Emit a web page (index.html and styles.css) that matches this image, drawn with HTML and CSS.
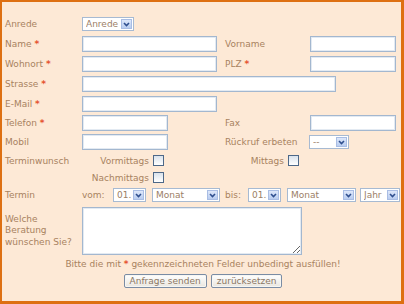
FILE: index.html
```html
<!DOCTYPE html>
<html lang="de">
<head>
    <meta charset="UTF-8">
    <title>Anfrage</title>
    <link rel="stylesheet" href="styles.css">
</head>
<body>
    <form class="frame">
        <div class="row">
            <span class="lbl">Anrede</span>
            <span class="sel sel-anrede">
                <select><option>Anrede</option><option>Herr</option><option>Frau</option></select>
                <span class="arr"><svg width="7" height="5" viewBox="0 0 7 5"><path d="M1 1l2.5 2.5L6 1" fill="none" stroke="#2f4f8f" stroke-width="1.6"/></svg></span>
            </span>
        </div>
        <div class="row">
            <span class="lbl">Name <b class="req">*</b></span>
            <span class="fld"><input class="inp inp-m" type="text"></span>
            <span class="lbl2">Vorname</span>
            <input class="inp inp-s" type="text">
        </div>
        <div class="row">
            <span class="lbl">Wohnort <b class="req">*</b></span>
            <span class="fld"><input class="inp inp-m" type="text"></span>
            <span class="lbl2">PLZ <b class="req">*</b></span>
            <input class="inp inp-s" type="text">
        </div>
        <div class="row">
            <span class="lbl">Strasse <b class="req">*</b></span>
            <input class="inp inp-l" type="text">
        </div>
        <div class="row">
            <span class="lbl">E-Mail <b class="req">*</b></span>
            <input class="inp inp-m" type="text">
        </div>
        <div class="row row-tel">
            <span class="lbl">Telefon <b class="req">*</b></span>
            <span class="fld"><input class="inp inp-s" type="text"></span>
            <span class="lbl2">Fax</span>
            <input class="inp inp-s" type="text">
        </div>
        <div class="row">
            <span class="lbl">Mobil</span>
            <span class="fld"><input class="inp inp-s" type="text"></span>
            <span class="lbl2">Rückruf erbeten</span>
            <span class="sel sel-rueck">
                <select><option>--</option><option>ja</option><option>nein</option></select>
                <span class="arr"><svg width="7" height="5" viewBox="0 0 7 5"><path d="M1 1l2.5 2.5L6 1" fill="none" stroke="#2f4f8f" stroke-width="1.6"/></svg></span>
            </span>
        </div>
        <div class="row row-time">
            <span class="lbl">Terminwunsch</span>
            <label class="cb1">Vormittags <input type="checkbox"></label>
            <label class="cb2">Mittags <input type="checkbox"></label>
        </div>
        <div class="row row-time">
            <span class="lbl"></span>
            <label class="cb1">Nachmittags <input type="checkbox"></label>
        </div>
        <div class="row row-termin">
            <span class="lbl">Termin</span>
            <span class="vom">vom:</span>
            <span class="sel sel-day">
                <select><option>01.</option></select>
                <span class="arr"><svg width="7" height="5" viewBox="0 0 7 5"><path d="M1 1l2.5 2.5L6 1" fill="none" stroke="#2f4f8f" stroke-width="1.6"/></svg></span>
            </span>
            <span class="sel sel-month">
                <select><option>Monat</option></select>
                <span class="arr"><svg width="7" height="5" viewBox="0 0 7 5"><path d="M1 1l2.5 2.5L6 1" fill="none" stroke="#2f4f8f" stroke-width="1.6"/></svg></span>
            </span>
            <span class="bis">bis:</span>
            <span class="sel sel-day">
                <select><option>01.</option></select>
                <span class="arr"><svg width="7" height="5" viewBox="0 0 7 5"><path d="M1 1l2.5 2.5L6 1" fill="none" stroke="#2f4f8f" stroke-width="1.6"/></svg></span>
            </span>
            <span class="sel sel-month2">
                <select><option>Monat</option></select>
                <span class="arr"><svg width="7" height="5" viewBox="0 0 7 5"><path d="M1 1l2.5 2.5L6 1" fill="none" stroke="#2f4f8f" stroke-width="1.6"/></svg></span>
            </span>
            <span class="sel sel-year">
                <select><option>Jahr</option></select>
                <span class="arr"><svg width="7" height="5" viewBox="0 0 7 5"><path d="M1 1l2.5 2.5L6 1" fill="none" stroke="#2f4f8f" stroke-width="1.6"/></svg></span>
            </span>
        </div>
        <div class="row row-msg">
            <span class="lbl lbl-multi">Welche<br>Beratung<br>wünschen Sie?</span>
            <textarea class="msg"></textarea>
        </div>
        <p class="note">Bitte die mit <b class="req">*</b> gekennzeichneten Felder unbedingt ausfüllen!</p>
        <div class="buttons">
            <button type="button" class="btn">Anfrage senden</button>
            <button type="reset" class="btn">zurücksetzen</button>
        </div>
    </form>
</body>
</html>
```

FILE: styles.css
```css
* {
    margin: 0;
    padding: 0;
    box-sizing: border-box;
}
body {
    font-family: 'DejaVu Sans', Verdana, sans-serif;
    font-size: 9px;
    color: #a8825f;
    background-color: #fde9d6;
}
.frame {
    width: 404px;
    height: 304px;
    border-style: solid;
    border-color: #de7012;
    border-width: 2px 3px 3px 2px;
    background-color: #fde9d6;
    padding: 12px 0 0 3px;
}
.row {
    display: flex;
    align-items: center;
    height: 20px;
}
.row-tel {
    height: 18px;
}
.row-time {
    height: 17px;
}
.row-termin {
    height: 18px;
}
.row-msg {
    height: 54px;
}
.lbl {
    width: 77px;
    flex-shrink: 0;
}
.lbl-multi {
    line-height: 11.5px;
}
.lbl2 {
    width: 85px;
    flex-shrink: 0;
}
.fld {
    width: 143px;
    flex-shrink: 0;
    display: flex;
}
.req {
    color: #e5532f;
    font-weight: bold;
}
.inp {
    height: 16px;
    border: 1px solid #a3b7cf;
    box-shadow: inset 0 0 0 1px #e3eaf2;
    background: #fff;
    font: inherit;
}
.inp-m {
    width: 135px;
}
.inp-s {
    width: 86px;
}
.inp-l {
    width: 254px;
}
.sel {
    display: inline-flex;
    align-items: center;
    height: 14px;
    border: 1px solid #a7bad2;
    background: #fff;
    padding-right: 1px;
    flex-shrink: 0;
}
.sel select {
    appearance: none;
    -webkit-appearance: none;
    border: none;
    background: transparent;
    font: inherit;
    color: #9c8066;
    padding-left: 3px;
    flex: 1;
    min-width: 0;
    height: 12px;
    line-height: 12px;
    outline: none;
}
.arr {
    display: flex;
    align-items: center;
    justify-content: center;
    width: 11px;
    height: 10px;
    border: 1px solid #a9bde4;
    background: linear-gradient(#dde7fa, #b9cdf0);
}
.sel-anrede {
    width: 52px;
}
.sel-rueck {
    width: 40px;
    margin-left: -1px;
}
.sel-day {
    width: 33px;
}
.sel-month {
    width: 68px;
    margin-left: 6px;
}
.sel-month2 {
    width: 69px;
    margin-left: 6px;
}
.sel-year {
    width: 40px;
    margin-left: 4px;
}
.vom {
    width: 31px;
}
.bis {
    width: 23px;
    margin-left: 5px;
}
.cb1, .cb2 {
    display: flex;
    align-items: center;
    justify-content: flex-end;
    gap: 4px;
    padding-right: 1px;
    flex-shrink: 0;
}
.cb1 {
    width: 83px;
}
.cb2 {
    width: 135px;
}
input[type="checkbox"] {
    appearance: none;
    -webkit-appearance: none;
    width: 11px;
    height: 11px;
    border: 1px solid #4d6888;
    background: linear-gradient(#d9e2ec, #fff);
    margin: 0;
}
.msg {
    width: 220px;
    height: 48px;
    border: 1px solid #a3b7cf;
    box-shadow: inset 0 0 0 1px #e3eaf2;
    background: #fff;
    font: inherit;
}
.note {
    height: 12px;
    line-height: 12px;
    text-align: center;
}
.buttons {
    display: flex;
    justify-content: center;
    gap: 4px;
    padding-top: 4px;
}
.btn {
    height: 14px;
    padding: 0 5px;
    font: inherit;
    color: #8c7763;
    border: 1px solid #7a8ca4;
    border-radius: 2px;
    background: linear-gradient(#ffffff, #e9e6df);
    box-shadow: inset 0 0 0 1px #f7f6f2;
}
```
